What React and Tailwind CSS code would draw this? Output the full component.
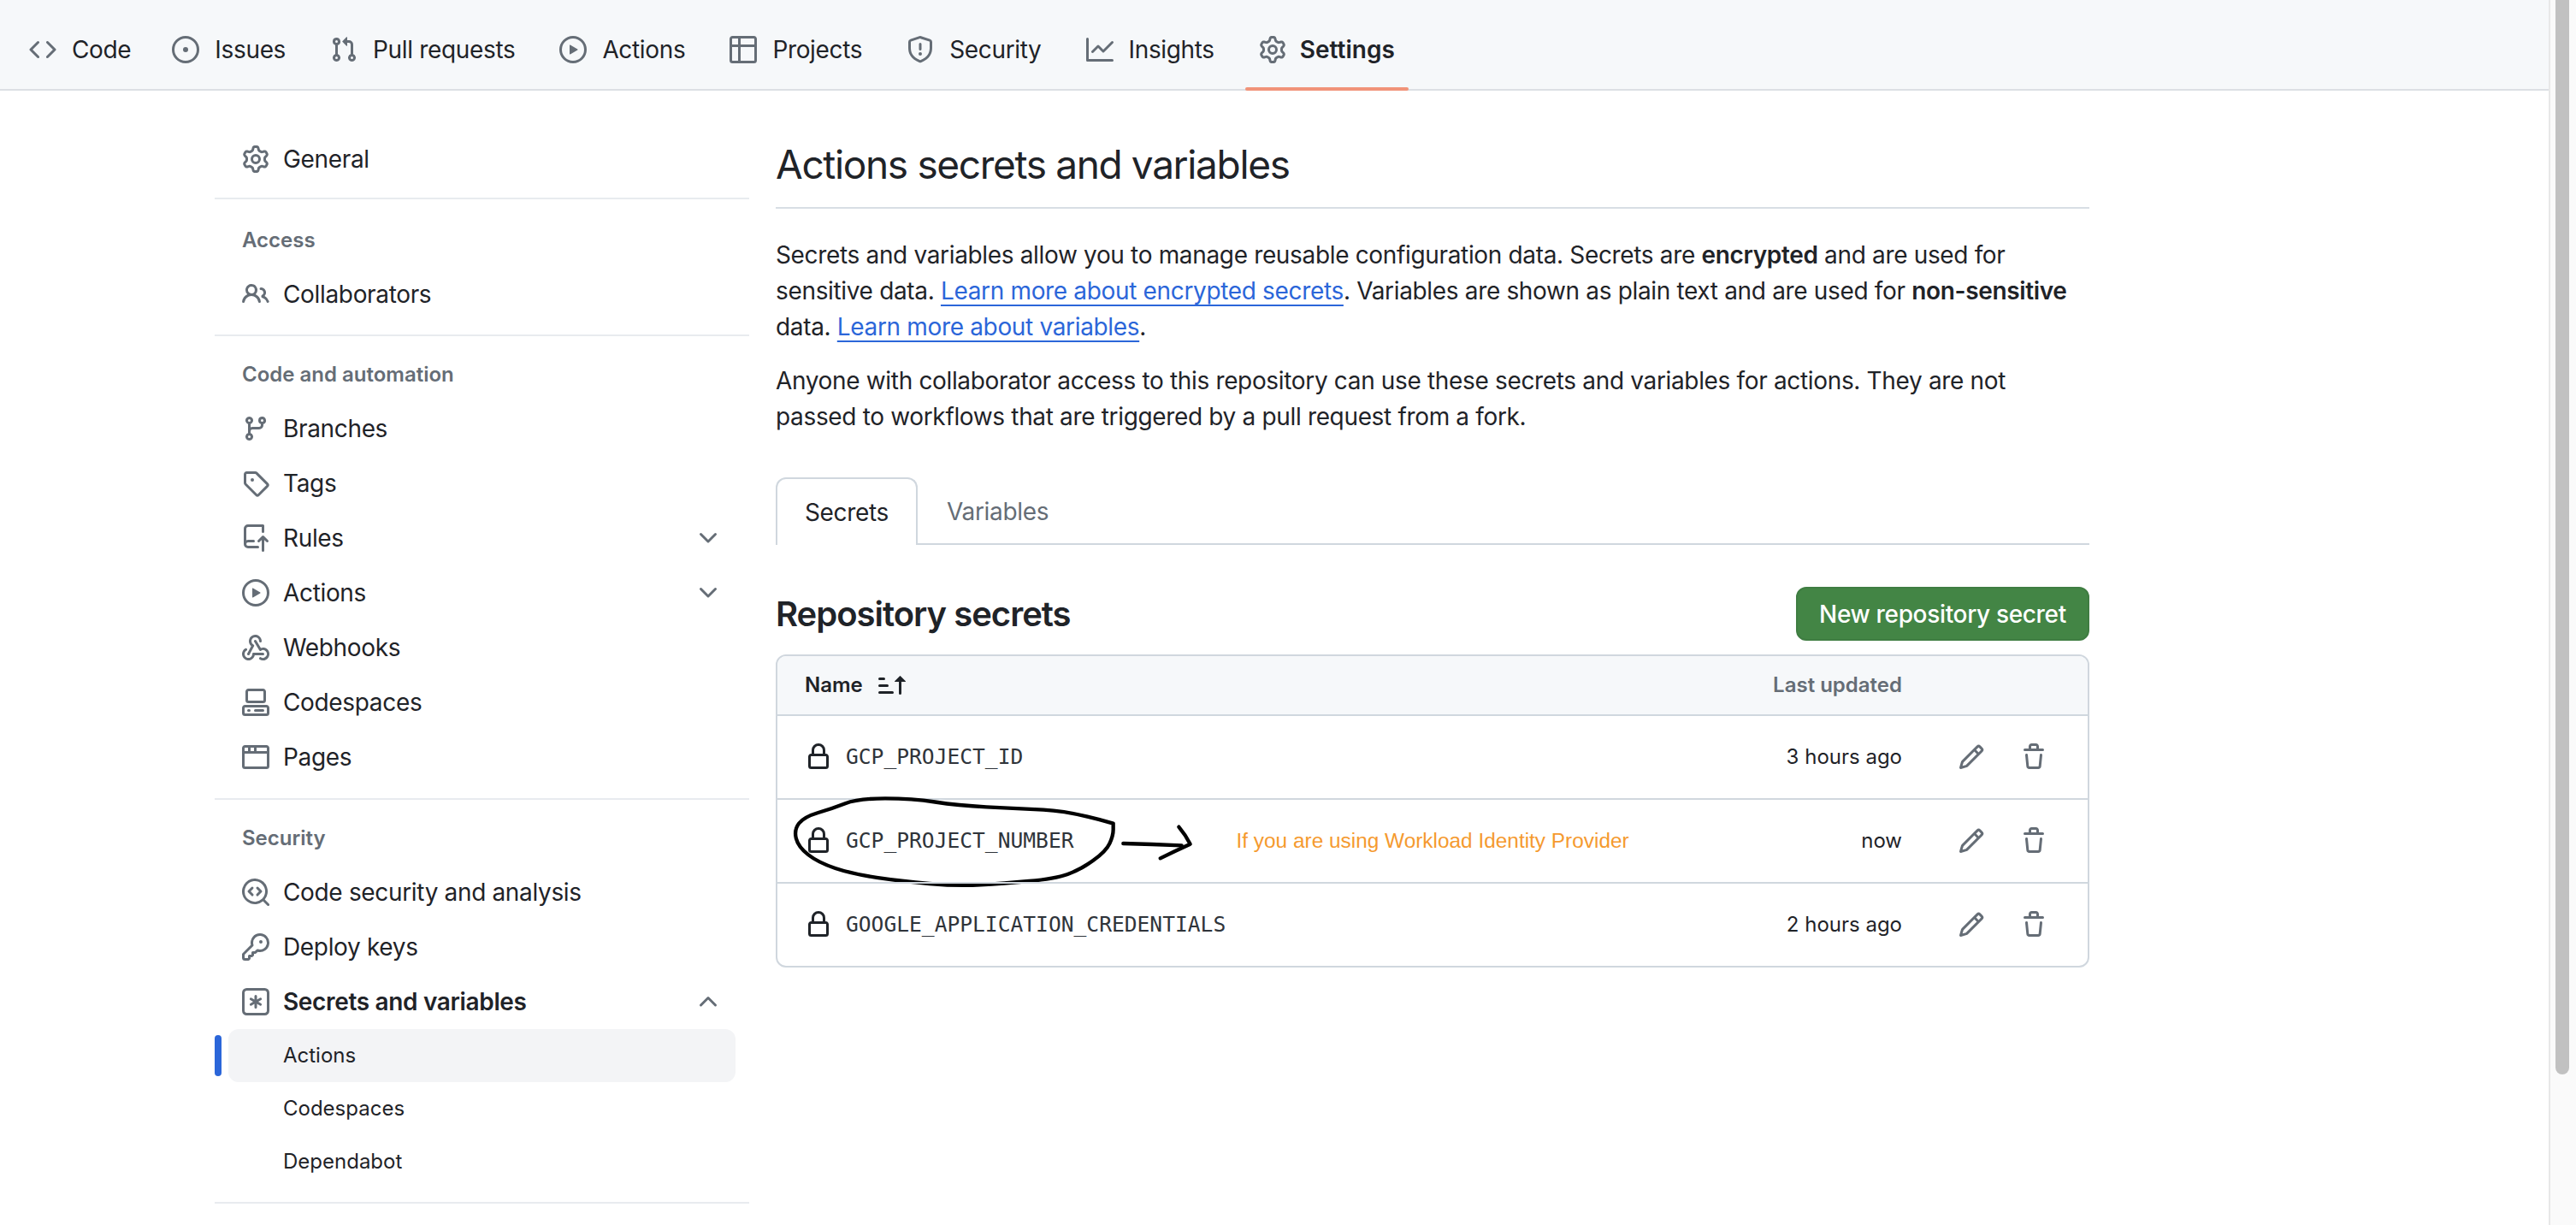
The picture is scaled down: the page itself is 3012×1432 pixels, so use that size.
import React from "react";

// 16px octicons, react-icons only ships the thinner 24px versions of most of them
const ICONS = {
  code: ["m11.28 3.22 4.25 4.25a.75.75 0 0 1 0 1.06l-4.25 4.25a.749.749 0 0 1-1.275-.326.749.749 0 0 1 .215-.734L13.94 8l-3.72-3.72a.749.749 0 0 1 .326-1.275.749.749 0 0 1 .734.215Zm-6.56 0a.751.751 0 0 1 1.042.018.751.751 0 0 1 .018 1.042L2.06 8l3.72 3.72a.749.749 0 0 1-.326 1.275.749.749 0 0 1-.734-.215L.47 8.53a.75.75 0 0 1 0-1.06Z"],
  issue: ["M8 9.5a1.5 1.5 0 1 0 0-3 1.5 1.5 0 0 0 0 3Z", "M8 0a8 8 0 1 1 0 16A8 8 0 0 1 8 0ZM1.5 8a6.5 6.5 0 1 0 13 0 6.5 6.5 0 0 0-13 0Z"],
  pull: ["M1.5 3.25a2.25 2.25 0 1 1 3 2.122v5.256a2.251 2.251 0 1 1-1.5 0V5.372A2.25 2.25 0 0 1 1.5 3.25Zm5.677-.177L9.573.677A.25.25 0 0 1 10 .854V2.5h1A2.5 2.5 0 0 1 13.5 5v5.628a2.251 2.251 0 1 1-1.5 0V5a1 1 0 0 0-1-1h-1v1.646a.25.25 0 0 1-.427.177L7.177 3.427a.25.25 0 0 1 0-.354ZM3.75 2.5a.75.75 0 1 0 0 1.5.75.75 0 0 0 0-1.5Zm0 9.5a.75.75 0 1 0 0 1.5.75.75 0 0 0 0-1.5Zm8.25.75a.75.75 0 1 0 1.5 0 .75.75 0 0 0-1.5 0Z"],
  play: ["M8 0a8 8 0 1 1 0 16A8 8 0 0 1 8 0ZM1.5 8a6.5 6.5 0 1 0 13 0 6.5 6.5 0 0 0-13 0Zm4.879-2.773 4.264 2.559a.25.25 0 0 1 0 .428l-4.264 2.559A.25.25 0 0 1 6 10.559V5.442a.25.25 0 0 1 .379-.215Z"],
  table: ["M0 1.75C0 .784.784 0 1.75 0h12.5C15.216 0 16 .784 16 1.75v12.5A1.75 1.75 0 0 1 14.25 16H1.75A1.75 1.75 0 0 1 0 14.25ZM6.5 6.5v8h7.75a.25.25 0 0 0 .25-.25V6.5Zm8-1.5V1.75a.25.25 0 0 0-.25-.25H6.5V5Zm-13 1.5v7.75c0 .138.112.25.25.25H5v-8ZM5 5V1.5H1.75a.25.25 0 0 0-.25.25V5Z"],
  shield: ["M7.467.133a1.748 1.748 0 0 1 1.066 0l5.25 1.68A1.75 1.75 0 0 1 15 3.48V7c0 1.566-.32 3.182-1.303 4.682-.983 1.498-2.585 2.813-5.032 3.855a1.697 1.697 0 0 1-1.33 0c-2.447-1.042-4.049-2.357-5.032-3.855C1.32 10.182 1 8.566 1 7V3.48a1.75 1.75 0 0 1 1.217-1.667Zm.61 1.429a.25.25 0 0 0-.153 0l-5.25 1.68a.25.25 0 0 0-.174.238V7c0 1.358.275 2.666 1.057 3.86.784 1.194 2.121 2.34 4.366 3.297a.196.196 0 0 0 .154 0c2.245-.956 3.582-2.104 4.366-3.298C13.225 9.666 13.5 8.36 13.5 7V3.48a.251.251 0 0 0-.174-.237l-5.25-1.68ZM8.75 4.75v3a.75.75 0 0 1-1.5 0v-3a.75.75 0 0 1 1.5 0ZM9 10.5a1 1 0 1 1-2 0 1 1 0 0 1 2 0Z"],
  graph: ["M1.5 1.75V13.5h13.75a.75.75 0 0 1 0 1.5H.75a.75.75 0 0 1-.75-.75V1.75a.75.75 0 0 1 1.5 0Zm14.28 2.53-5.25 5.25a.75.75 0 0 1-1.06 0L7 7.06 4.28 9.78a.751.751 0 0 1-1.042-.018.751.751 0 0 1-.018-1.042l3.25-3.25a.75.75 0 0 1 1.06 0L10 7.94l4.72-4.72a.751.751 0 0 1 1.042.018.751.751 0 0 1 .018 1.042Z"],
  gear: ["M8 0a8.2 8.2 0 0 1 .701.031C9.444.095 9.99.645 10.16 1.29l.288 1.107c.018.066.079.158.212.224.231.114.454.243.668.386.123.082.233.09.299.071l1.103-.303c.644-.176 1.392.021 1.82.63.27.385.506.792.704 1.218.315.675.111 1.422-.364 1.891l-.814.806c-.049.048-.098.147-.088.294.016.257.016.515 0 .772-.01.147.038.246.088.294l.814.806c.475.469.679 1.216.364 1.891a7.977 7.977 0 0 1-.704 1.217c-.428.61-1.176.807-1.82.63l-1.102-.302c-.067-.019-.177-.011-.3.071a5.909 5.909 0 0 1-.668.386c-.133.066-.194.158-.211.224l-.29 1.106c-.168.646-.715 1.196-1.458 1.26a8.006 8.006 0 0 1-1.402 0c-.743-.064-1.289-.614-1.458-1.26l-.289-1.106c-.018-.066-.079-.158-.212-.224a5.738 5.738 0 0 1-.668-.386c-.123-.082-.233-.09-.299-.071l-1.103.303c-.644.176-1.392-.021-1.82-.63a8.12 8.12 0 0 1-.704-1.218c-.315-.675-.111-1.422.363-1.891l.815-.806c.05-.048.098-.147.088-.294a6.214 6.214 0 0 1 0-.772c.01-.147-.038-.246-.088-.294l-.815-.806C.635 6.045.431 5.298.746 4.623a7.92 7.92 0 0 1 .704-1.217c.428-.61 1.176-.807 1.82-.63l1.102.302c.067.019.177.011.3-.071.214-.143.437-.272.668-.386.133-.066.194-.158.211-.224l.29-1.106C6.009.645 6.556.095 7.299.03 7.53.01 7.764 0 8 0Zm-.571 1.525c-.036.003-.108.036-.137.146l-.289 1.105c-.147.561-.549.967-.998 1.189-.173.086-.34.183-.5.29-.417.278-.97.423-1.529.27l-1.103-.303c-.109-.03-.175.016-.195.045-.22.312-.412.644-.573.99-.014.031-.021.11.059.19l.815.806c.411.406.562.957.53 1.456a4.709 4.709 0 0 0 0 .582c.032.499-.119 1.05-.53 1.456l-.815.806c-.081.08-.073.159-.059.19.162.346.353.677.573.989.02.03.085.076.195.046l1.102-.303c.56-.153 1.113-.008 1.53.27.161.107.328.204.501.29.447.222.85.629.997 1.189l.289 1.105c.029.109.101.143.137.146a6.6 6.6 0 0 0 1.142 0c.036-.003.108-.036.137-.146l.289-1.105c.147-.561.549-.967.998-1.189.173-.086.34-.183.5-.29.417-.278.97-.423 1.529-.27l1.103.303c.109.029.175-.016.195-.045.22-.313.411-.644.573-.99.014-.031.021-.11-.059-.19l-.815-.806c-.411-.406-.562-.957-.53-1.456a4.709 4.709 0 0 0 0-.582c-.032-.499.119-1.05.53-1.456l.815-.806c.081-.08.073-.159.059-.19a6.464 6.464 0 0 0-.573-.989c-.02-.03-.085-.076-.195-.046l-1.102.303c-.56.153-1.113.008-1.53-.27a4.44 4.44 0 0 0-.501-.29c-.447-.222-.85-.629-.997-1.189l-.289-1.105c-.029-.11-.101-.143-.137-.146a6.6 6.6 0 0 0-1.142 0ZM11 8a3 3 0 1 1-6 0 3 3 0 0 1 6 0ZM9.5 8a1.5 1.5 0 1 0-3.001.001A1.5 1.5 0 0 0 9.5 8Z"],
  people: ["M2 5.5a3.5 3.5 0 1 1 5.898 2.549 5.508 5.508 0 0 1 3.034 4.084.75.75 0 1 1-1.482.235 4 4 0 0 0-7.9 0 .75.75 0 0 1-1.482-.236A5.507 5.507 0 0 1 3.102 8.05 3.493 3.493 0 0 1 2 5.5ZM11 4a3.001 3.001 0 0 1 2.22 5.018 5.01 5.01 0 0 1 2.56 3.012.749.749 0 0 1-.885.954.752.752 0 0 1-.549-.514 3.507 3.507 0 0 0-2.522-2.372.75.75 0 0 1-.574-.73v-.352a.75.75 0 0 1 .416-.672A1.5 1.5 0 0 0 11 5.5.75.75 0 0 1 11 4Zm-5.5-.5a2 2 0 1 0-.001 3.999A2 2 0 0 0 5.5 3.5Z"],
  branch: ["M9.5 3.25a2.25 2.25 0 1 1 3 2.122V6A2.5 2.5 0 0 1 10 8.5H6a1 1 0 0 0-1 1v1.128a2.251 2.251 0 1 1-1.5 0V5.372a2.25 2.25 0 1 1 1.5 0v1.836A2.493 2.493 0 0 1 6 7h4a1 1 0 0 0 1-1v-.628A2.25 2.25 0 0 1 9.5 3.25Zm-6 0a.75.75 0 1 0 1.5 0 .75.75 0 0 0-1.5 0Zm8.25-.75a.75.75 0 1 0 0 1.5.75.75 0 0 0 0-1.5ZM4.25 12a.75.75 0 1 0 0 1.5.75.75 0 0 0 0-1.5Z"],
  tag: ["M1 7.775V2.75C1 1.784 1.784 1 2.75 1h5.025c.464 0 .91.184 1.238.513l6.25 6.25a1.75 1.75 0 0 1 0 2.474l-5.026 5.026a1.75 1.75 0 0 1-2.474 0l-6.25-6.25A1.752 1.752 0 0 1 1 7.775Zm1.5 0c0 .066.026.13.073.177l6.25 6.25a.25.25 0 0 0 .354 0l5.025-5.025a.25.25 0 0 0 0-.354l-6.25-6.25a.25.25 0 0 0-.177-.073H2.75a.25.25 0 0 0-.25.25ZM6 5a1 1 0 1 1 0 2 1 1 0 0 1 0-2Z"],
  repoPush: ["M1 2.5A2.5 2.5 0 0 1 3.5 0h8.75a.75.75 0 0 1 .75.75v3.5a.75.75 0 0 1-1.5 0V1.5h-8a1 1 0 0 0-1 1v6.708A2.493 2.493 0 0 1 3.5 9h3.25a.75.75 0 0 1 0 1.5H3.5a1 1 0 0 0 0 2h5.75a.75.75 0 0 1 0 1.5H3.5A2.5 2.5 0 0 1 1 11.5Zm13.23 7.79h-.001l-1.224-1.224v6.184a.75.75 0 0 1-1.5 0V9.066L10.28 10.29a.75.75 0 0 1-1.06-1.061l2.505-2.504a.75.75 0 0 1 1.06 0L15.29 9.23a.751.751 0 0 1-.018 1.042.751.751 0 0 1-1.042.018Z"],
  webhook: ["M5.5 4.25a2.25 2.25 0 0 1 4.5 0 .75.75 0 0 0 1.5 0 3.75 3.75 0 1 0-6.14 2.889l-2.272 4.258a.75.75 0 0 0 1.324.706L7 7.25a.75.75 0 0 0-.309-1.015A2.25 2.25 0 0 1 5.5 4.25Z", "M7.364 3.607a.75.75 0 0 1 1.03.257l2.608 4.349a3.75 3.75 0 1 1-.628 6.785.75.75 0 0 1 .752-1.299 2.25 2.25 0 1 0-.033-3.88.75.75 0 0 1-1.03-.256L7.107 4.636a.75.75 0 0 1 .257-1.03Z", "M2.9 8.776A.75.75 0 0 1 2.625 9.8 2.25 2.25 0 1 0 6 11.75a.75.75 0 0 1 .75-.751h5.5a.75.75 0 0 1 0 1.5H7.425a3.751 3.751 0 1 1-5.55-3.998.75.75 0 0 1 1.024.274Z"],
  codespaces: ["M0 11.25c0-.966.784-1.75 1.75-1.75h12.5c.966 0 1.75.784 1.75 1.75v3A1.75 1.75 0 0 1 14.25 16H1.75A1.75 1.75 0 0 1 0 14.25Zm2-9.5C2 .784 2.784 0 3.75 0h8.5C13.216 0 14 .784 14 1.75v5a1.75 1.75 0 0 1-1.75 1.75h-8.5A1.75 1.75 0 0 1 2 6.75Zm1.75-.25a.25.25 0 0 0-.25.25v5c0 .138.112.25.25.25h8.5a.25.25 0 0 0 .25-.25v-5a.25.25 0 0 0-.25-.25Zm-2 9.5a.25.25 0 0 0-.25.25v3c0 .138.112.25.25.25h12.5a.25.25 0 0 0 .25-.25v-3a.25.25 0 0 0-.25-.25Z", "M7 12.75a.75.75 0 0 1 .75-.75h4.5a.75.75 0 0 1 0 1.5h-4.5a.75.75 0 0 1-.75-.75Zm-4 0a.75.75 0 0 1 .75-.75h.5a.75.75 0 0 1 0 1.5h-.5a.75.75 0 0 1-.75-.75Z"],
  browser: ["M0 2.75C0 1.784.784 1 1.75 1h12.5c.966 0 1.75.784 1.75 1.75v10.5A1.75 1.75 0 0 1 14.25 15H1.75A1.75 1.75 0 0 1 0 13.25ZM14.5 6h-13v7.25c0 .138.112.25.25.25h12.5a.25.25 0 0 0 .25-.25Zm-6-3.5v2h6V2.75a.25.25 0 0 0-.25-.25ZM5 2.5v2h2v-2Zm-3.25 0a.25.25 0 0 0-.25.25V4.5h2v-2Z"],
  codescan: ["M8.47 4.97a.75.75 0 0 0 0 1.06L9.94 7.5 8.47 8.97a.75.75 0 1 0 1.06 1.06l2-2a.75.75 0 0 0 0-1.06l-2-2a.75.75 0 0 0-1.06 0ZM6.53 6.03a.75.75 0 0 0-1.06-1.06l-2 2a.75.75 0 0 0 0 1.06l2 2a.75.75 0 1 0 1.06-1.06L5.06 7.5l1.47-1.47Z", "M12.246 13.307a7.501 7.501 0 1 1 1.06-1.06l2.474 2.473a.749.749 0 0 1-.326 1.275.749.749 0 0 1-.734-.215ZM1.5 7.5a6.002 6.002 0 0 0 3.608 5.504 6.002 6.002 0 0 0 6.486-1.117.748.748 0 0 1 .292-.293A6 6 0 1 0 1.5 7.5Z"],
  key: ["M10.5 0a5.499 5.499 0 1 1-1.288 10.848l-.932.932a.749.749 0 0 1-.53.22H7v.75a.749.749 0 0 1-.22.53l-.5.5a.749.749 0 0 1-.53.22H5v.75a.749.749 0 0 1-.22.53l-.5.5a.749.749 0 0 1-.53.22h-2A1.75 1.75 0 0 1 0 14.25v-2c0-.199.079-.389.22-.53l4.932-4.932A5.5 5.5 0 0 1 10.5 0Zm-4 5.5c-.001.431.069.86.205 1.269a.75.75 0 0 1-.181.768L1.5 12.56v1.69c0 .138.112.25.25.25h1.69l.06-.06v-1.19a.75.75 0 0 1 .75-.75h1.19l.06-.06v-1.19a.75.75 0 0 1 .75-.75h1.19l1.023-1.025a.75.75 0 0 1 .768-.18A4 4 0 1 0 6.5 5.5ZM11 6a1 1 0 1 1 0-2 1 1 0 0 1 0 2Z"],
  keyAsterisk: ["M0 2.75A2.75 2.75 0 0 1 2.75 0h10.5A2.75 2.75 0 0 1 16 2.75v10.5A2.75 2.75 0 0 1 13.25 16H2.75A2.75 2.75 0 0 1 0 13.25ZM2.75 1.5c-.69 0-1.25.56-1.25 1.25v10.5c0 .69.56 1.25 1.25 1.25h10.5c.69 0 1.25-.56 1.25-1.25V2.75c0-.69-.56-1.25-1.25-1.25Z", "M8 4a.75.75 0 0 1 .75.75V6.7l1.69-.975a.75.75 0 0 1 .75 1.3L9.5 8l1.69.976a.75.75 0 0 1-.75 1.298L8.75 9.3v1.951a.75.75 0 0 1-1.5 0V9.299l-1.69.976a.75.75 0 0 1-.75-1.3L6.5 8l-1.69-.975a.75.75 0 0 1 .75-1.3l1.69.976V4.75A.75.75 0 0 1 8 4Z"],
  chevronDown: ["M12.78 5.22a.749.749 0 0 1 0 1.06l-4.25 4.25a.749.749 0 0 1-1.06 0L3.22 6.28a.749.749 0 1 1 1.06-1.06L8 8.939l3.72-3.719a.749.749 0 0 1 1.06 0Z"],
  chevronUp: ["M3.22 10.53a.749.749 0 0 1 0-1.06l4.25-4.25a.749.749 0 0 1 1.06 0l4.25 4.25a.749.749 0 1 1-1.06 1.06L8 6.811 4.28 10.53a.749.749 0 0 1-1.06 0Z"],
  lock: ["M4 4a4 4 0 0 1 8 0v2h.25c.966 0 1.75.784 1.75 1.75v5.5A1.75 1.75 0 0 1 12.25 15h-8.5A1.75 1.75 0 0 1 2 13.25v-5.5C2 6.784 2.784 6 3.75 6H4Zm8.25 3.5h-8.5a.25.25 0 0 0-.25.25v5.5c0 .138.112.25.25.25h8.5a.25.25 0 0 0 .25-.25v-5.5a.25.25 0 0 0-.25-.25ZM10.5 6V4a2.5 2.5 0 1 0-5 0v2Z"],
  pencil: ["M11.013 1.427a1.75 1.75 0 0 1 2.474 0l1.086 1.086a1.75 1.75 0 0 1 0 2.474l-8.61 8.61c-.21.21-.47.364-.756.445l-3.251.93a.75.75 0 0 1-.927-.928l.929-3.25c.081-.286.235-.547.445-.758l8.61-8.61Zm.176 4.823L9.75 4.81l-6.286 6.287a.253.253 0 0 0-.064.108l-.558 1.953 1.953-.558a.253.253 0 0 0 .108-.064Zm1.238-3.763a.25.25 0 0 0-.354 0L10.811 3.75l1.439 1.44 1.263-1.263a.25.25 0 0 0 0-.354Z"],
  trash: ["M11 1.75V3h2.25a.75.75 0 0 1 0 1.5H2.75a.75.75 0 0 1 0-1.5H5V1.75C5 .784 5.784 0 6.75 0h2.5C10.216 0 11 .784 11 1.75ZM4.496 6.675l.66 6.6a.25.25 0 0 0 .249.225h5.19a.25.25 0 0 0 .249-.225l.66-6.6a.75.75 0 0 1 1.492.149l-.66 6.6A1.748 1.748 0 0 1 10.595 15h-5.19a1.75 1.75 0 0 1-1.741-1.575l-.66-6.6a.75.75 0 1 1 1.492-.15ZM6.5 1.75V3h3V1.75a.25.25 0 0 0-.25-.25h-2.5a.25.25 0 0 0-.25.25Z"],
  sortAsc: ["m12.927 2.573 3 3A.25.25 0 0 1 15.75 6H13.5v6.75a.75.75 0 0 1-1.5 0V6H9.75a.25.25 0 0 1-.177-.427l3-3a.25.25 0 0 1 .354 0ZM0 12.25a.75.75 0 0 1 .75-.75h7.5a.75.75 0 0 1 0 1.5H.75a.75.75 0 0 1-.75-.75Zm0-4a.75.75 0 0 1 .75-.75h4.5a.75.75 0 0 1 0 1.5H.75A.75.75 0 0 1 0 8.25Zm0-4a.75.75 0 0 1 .75-.75h2.5a.75.75 0 0 1 0 1.5H.75A.75.75 0 0 1 0 4.25Z"],
};

function Octicon({ name, className }) {
  return (
    <svg className={`shrink-0 ${className}`} width="32" height="32" viewBox="0 0 16 16" fill="currentColor">
      {ICONS[name].map((d) => (
        <path key={d} d={d} />
      ))}
    </svg>
  );
}

const tabs = [
  { label: "Code", icon: "code" },
  { label: "Issues", icon: "issue" },
  { label: "Pull requests", icon: "pull" },
  { label: "Actions", icon: "play" },
  { label: "Projects", icon: "table" },
  { label: "Security", icon: "shield" },
  { label: "Insights", icon: "graph" },
  { label: "Settings", icon: "gear", active: true },
];

const secrets = [
  { name: "GCP_PROJECT_ID", updated: "3 hours ago" },
  { name: "GCP_PROJECT_NUMBER", updated: "now", note: "If you are using Workload Identity Provider", marked: true },
  { name: "GOOGLE_APPLICATION_CREDENTIALS", updated: "2 hours ago" },
];

// hand drawn circle, in the coordinates of the annotation svg (3x)
const scribble = [
  [1145, 128], [1000, 85], [800, 75], [600, 65], [440, 40], [250, 40], [160, 75], [60, 105], [25, 150],
  [40, 210], [110, 265], [230, 305], [400, 330], [600, 348], [760, 338], [940, 322], [1030, 290], [1120, 225],
  [1145, 170], [1145, 128],
];

function smoothPath(points) {
  let d = `M${points[0][0]} ${points[0][1]}`;
  for (let i = 1; i < points.length - 1; i++) {
    const midX = (points[i][0] + points[i + 1][0]) / 2;
    const midY = (points[i][1] + points[i + 1][1]) / 2;
    d += ` Q${points[i][0]} ${points[i][1]} ${midX} ${midY}`;
  }
  return d + ` L${points[points.length - 1][0]} ${points[points.length - 1][1]}`;
}

function SideItem({ icon, label, chevron, bold }) {
  return (
    <div className="flex h-[64px] items-center px-[16px]">
      <Octicon name={icon} className="mr-[16px] text-[#656d76]" />
      <span className={`flex-1 ${bold ? "font-semibold" : ""}`}>{label}</span>
      {chevron === "down" && <Octicon name="chevronDown" className="text-[#656d76]" />}
      {chevron === "up" && <Octicon name="chevronUp" className="text-[#656d76]" />}
    </div>
  );
}

function SideHeading({ children }) {
  return <div className="mb-[15px] flex h-[32px] items-center pl-[16px] text-[24px] font-semibold tracking-normal text-[#656d76]">{children}</div>;
}

function SubItem({ label, active }) {
  return (
    <div className={`relative flex h-[62px] items-center rounded-[12px] pl-[64px] text-[24px] tracking-normal ${active ? "bg-[#f3f4f6]" : ""}`}>
      {active && <span className="absolute -left-[16px] top-[7px] h-[48px] w-[8px] rounded-[4px] bg-[#2b66d9]" />}
      {label}
    </div>
  );
}

function Sidebar() {
  return (
    <aside className="w-[625px] shrink-0 pt-[48px]">
      <div className="mx-[16px]">
        <SideItem icon="gear" label="General" />
      </div>
      <div className="mt-[13px] h-[2px] bg-[#e8ebef]" />

      <div className="mx-[16px] pt-[32px]">
        <SideHeading>Access</SideHeading>
        <SideItem icon="people" label="Collaborators" />
      </div>
      <div className="mt-[15px] h-[2px] bg-[#e8ebef]" />

      <div className="mx-[16px] pt-[29px]">
        <SideHeading>Code and automation</SideHeading>
        <SideItem icon="branch" label="Branches" />
        <SideItem icon="tag" label="Tags" />
        <SideItem icon="repoPush" label="Rules" chevron="down" />
        <SideItem icon="play" label="Actions" chevron="down" />
        <SideItem icon="webhook" label="Webhooks" />
        <SideItem icon="codespaces" label="Codespaces" />
        <SideItem icon="browser" label="Pages" />
      </div>
      <div className="mt-[16px] h-[2px] bg-[#e8ebef]" />

      <div className="mx-[16px] pt-[29px]">
        <SideHeading>Security</SideHeading>
        <SideItem icon="codescan" label="Code security and analysis" />
        <SideItem icon="key" label="Deploy keys" />
        <SideItem icon="keyAsterisk" label="Secrets and variables" chevron="up" bold />
        <SubItem label="Actions" active />
        <SubItem label="Codespaces" />
        <SubItem label="Dependabot" />
      </div>
      <div className="mt-[16px] h-[2px] bg-[#e8ebef]" />
    </aside>
  );
}

function SecretRow({ secret }) {
  return (
    <div className="relative flex h-[98px] items-center border-t-2 border-[#d0d7de] pl-[32px] pr-[47px]">
      <Octicon name="lock" className="mr-[16px] text-[#1f2328]" />
      <span className="font-['DejaVu_Sans_Mono',monospace] text-[24.6px] tracking-normal text-[#2f343a]">{secret.name}</span>
      {secret.note && (
        <span className="ml-[190px] font-['Liberation_Sans',sans-serif] text-[24.4px] tracking-normal text-[#f59a2f]">{secret.note}</span>
      )}
      <span className="ml-auto text-[24px] tracking-normal">{secret.updated}</span>
      <Octicon name="pencil" className="ml-[65px] text-[#656d76]" />
      <Octicon name="trash" className="ml-[41px] text-[#656d76]" />
      {secret.marked && (
        <svg className="absolute -top-[15px] left-[11px] overflow-visible" width="520" height="130" viewBox="0 0 1560 390" fill="none" stroke="#000" strokeWidth="13" strokeLinecap="round" strokeLinejoin="round">
          <path d={smoothPath(scribble)} />
          <path d="M1180 198 Q1280 200 1385 205" />
          <path d="M1375 140 Q1400 170 1415 200 Q1360 225 1310 250" />
        </svg>
      )}
    </div>
  );
}

export default function App() {
  return (
    <div className="flex h-[1432px] overflow-hidden bg-white font-['Inter',sans-serif] text-[28px] tracking-[-0.34px] text-[#1f2328]">
      <div className="min-w-0 flex-1">
        <nav className="flex h-[106px] gap-[20px] border-b-2 border-[#dcdfe4] bg-[#f6f8fa] pl-[18px]">
          {tabs.map((tab) => (
            <div key={tab.label} className="relative flex h-full items-center px-[16px] pt-[12px] first:pr-[12px]">
              <Octicon name={tab.icon} className={`text-[#656d76] ${tab.active ? "mr-[16px]" : "mr-[18px]"}`} />
              <span className={tab.active ? "font-semibold tracking-normal" : ""}>{tab.label}</span>
              {tab.active && <span className="absolute inset-x-0 -bottom-[2px] h-[4px] rounded-[2px] bg-[#f19379]" />}
            </div>
          ))}
        </nav>

        <div className="flex pl-[251px]">
          <Sidebar />

          <main className="ml-[31px] w-[1536px] pt-[56px]">
            <h1 className="border-b-2 border-[#d8dee4] pb-[20px] text-[46px] leading-[60px] tracking-[-1.35px]">Actions secrets and variables</h1>

            <p className="mt-[33px] whitespace-nowrap leading-[42px]">
              Secrets and variables allow you to manage reusable configuration data. Secrets are <b className="font-semibold">encrypted</b> and are used for
              <br />
              sensitive data. <a className="text-[#2b66d9] underline decoration-2 underline-offset-[6px]">Learn more about encrypted secrets</a>. Variables are shown as plain text and are used for <b className="font-semibold">non-sensitive</b>
              <br />
              data. <a className="text-[#2b66d9] underline decoration-2 underline-offset-[6px]">Learn more about variables</a>.
            </p>
            <p className="mt-[21px] whitespace-nowrap leading-[42px]">
              Anyone with collaborator access to this repository can use these secrets and variables for actions. They are not
              <br />
              passed to workflows that are triggered by a pull request from a fork.
            </p>

            <div className="mt-[50px] flex h-[79px] border-b-2 border-[#d0d7de]">
              <div className="-mb-[2px] flex h-[79px] w-[166px] items-center justify-center rounded-t-[12px] border-x-2 border-t-2 border-[#d0d7de] bg-white">Secrets</div>
              <div className="ml-[34px] flex items-center pt-[2px] text-[#656d76]">Variables</div>
            </div>

            <div className="mt-[49px] flex items-center justify-between">
              <h2 className="text-[40px] font-semibold tracking-[-1px]">Repository secrets</h2>
              <button className="h-[63px] w-[343px] rounded-[12px] border-2 border-[#3f7d42] bg-[#438545] font-medium text-white">New repository secret</button>
            </div>

            <div className="mt-[16px] rounded-[12px] border-2 border-[#d0d7de]">
              <div className="flex h-[68px] items-center rounded-t-[10px] bg-[#f6f8fa] pl-[32px] pr-[47px] text-[24px] tracking-normal">
                <span className="font-semibold">Name</span>
                <Octicon name="sortAsc" className="ml-[18px]" />
                <span className="ml-auto mr-[170px] font-semibold text-[#656d76]">Last updated</span>
              </div>
              {secrets.map((secret) => (
                <SecretRow key={secret.name} secret={secret} />
              ))}
            </div>
          </main>
        </div>
      </div>

      <div className="h-full w-[32px] shrink-0 border-l-2 border-[#e8e8e8] bg-[#fafafa] pr-[2px]">
        <div className="ml-[6px] h-[1256px] w-[16px] rounded-b-[8px] bg-[#c1c1c1]" />
      </div>
    </div>
  );
}
